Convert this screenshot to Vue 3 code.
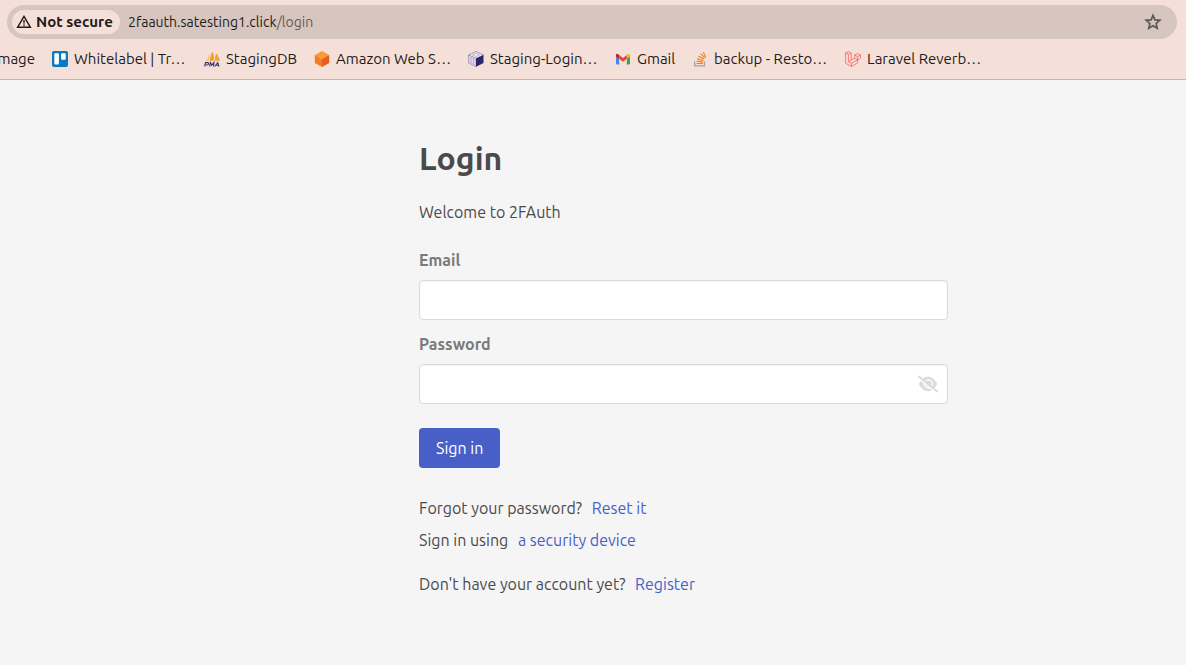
<script setup>
import { ref } from 'vue'

const email = ref('')
const password = ref('')
const revealed = ref(false)

const bookmarks = [
  { label: 'Whitelabel | Tr…', icon: 'board' },
  { label: 'StagingDB', icon: 'pma' },
  { label: 'Amazon Web S…', icon: 'cube' },
  { label: 'Staging-Login…', icon: 'box' },
  { label: 'Gmail', icon: 'mail' },
  { label: 'backup - Resto…', icon: 'stack' },
  { label: 'Laravel Reverb…', icon: 'laravel' },
]
</script>

<template>
  <div class="window">
    <header class="chrome">
      <div class="omnibox">
        <button class="security" type="button">
          <svg viewBox="0 0 16 16" width="16" height="16" aria-hidden="true">
            <path d="M8 2.4 14.4 13.3H1.6Z" fill="none" stroke="#1f1b1a" stroke-width="1.4" />
            <path d="M8 6v3.6M8 10.4v1.5" stroke="#1f1b1a" stroke-width="1.4" />
          </svg>
          <span>Not secure</span>
        </button>
        <a class="address" href="#"><span>2faauth.satesting1.click</span><span class="path">/login</span></a>
        <button class="star" type="button" aria-label="Bookmark this tab">
          <svg viewBox="0 0 18 18" width="18" height="18" aria-hidden="true">
            <path d="M9 2.4 10.9 6.9 15.8 7.3 12.1 10.5 13.2 15.3 9 12.8 4.8 15.3 5.9 10.5 2.2 7.3 7.1 6.9Z" fill="none" stroke="#5b5857" stroke-width="1.7" />
          </svg>
        </button>
      </div>
      <nav class="bookmarks" aria-label="Bookmarks">
        <a href="#" class="bookmark clipped">mage</a>
        <a v-for="b in bookmarks" :key="b.label" href="#" class="bookmark">
          <svg viewBox="0 0 16 16" width="16" height="16" aria-hidden="true">
            <g v-if="b.icon === 'board'">
              <rect width="16" height="16" rx="2" fill="#0b79bf" />
              <rect x="2.3" y="2.2" width="4.6" height="11.2" rx="1" fill="#fff" />
              <rect x="9.1" y="2.2" width="4.6" height="6.6" rx="1" fill="#fff" />
            </g>
            <g v-else-if="b.icon === 'pma'">
              <path d="M5.2 1.2C5 5 3.6 8.4 1 10.5L5.5 9.7Z" fill="#f9c27c" />
              <path d="M8.4.6C6.8 3.5 6 6.5 6 10l4-.5C10.2 6.5 9.6 3 8.4.6Z" fill="#f89c2c" />
              <path d="M12.3 2.5C11.2 5 10.8 7 10.9 9.8L15.8 10C15.4 7 14 4.5 12.3 2.5Z" fill="#f5a03c" />
              <path d="M.6 15.5 1.5 11.6H3.7Q5 11.7 4.6 12.9T2.8 14H1.1M5.5 15.5 6.5 11.6 7.7 14.2 10 11.6 9.4 15.5M10.7 15.5 13.7 11.6 15 15.5M12 14.3H14.7" fill="none" stroke="#34376c" stroke-width="1.1" />
            </g>
            <g v-else-if="b.icon === 'cube'">
              <path d="M8 0 15.2 4 8 8 .8 4Z" fill="#fb9a31" />
              <path d="M.8 4 8 8V16L.8 12Z" fill="#f57c22" />
              <path d="M15.2 4 8 8V16L15.2 12Z" fill="#e85c1c" />
            </g>
            <g v-else-if="b.icon === 'box'">
              <path d="M8 .5 15.5 4 8 7.5.5 4Z" fill="#f6edf1" stroke="#8583a5" stroke-width=".8" />
              <path d="M4.5 4 8 2.4 11.5 4 8 5.5Z" fill="none" stroke="#9a98b8" stroke-width=".6" />
              <path d="M.5 4 8 7.5V15.7L.5 12Z" fill="#f3e8f0" stroke="#8c86ad" stroke-width=".7" />
              <path d="M1 6.2 7.5 9.3M1 8.500 7.5 11.6M1 10.8 7.5 13.9" stroke="#d79bb8" stroke-width=".8" />
              <path d="M3 5.5V13M5.500 6.6V14" stroke="#9fb4d4" stroke-width=".8" />
              <path d="M15.5 4 8 7.5V15.7L15.5 12Z" fill="#29256f" />
            </g>
            <g v-else-if="b.icon === 'mail'">
              <path d="M1 3.5V12.5Q1 13.5 2 13.5H4.2V6.8Z" fill="#4285f4" />
              <path d="M11.8 6.8V13.5H14Q15 13.5 15 12.5V3.5Z" fill="#34a853" />
              <path d="M11.8 4V7.8L15 5.4V4Q14.6 2 12.8 3.2Z" fill="#fbbc04" />
              <path d="M1 4V5.4L4.2 7.8V4L3.2 3.2Q1.4 2 1 4Z" fill="#c5221f" />
              <path d="M4.2 4V7.8L8 10.7 11.8 7.8V4L8 6.9Z" fill="#ea4335" />
            </g>
            <g v-else-if="b.icon === 'stack'" fill="none">
              <path d="M2.7 10.5V14.8H12.4V10.5" stroke="#a4a09f" stroke-width="1.3" />
              <path d="M4.4 12.5H10.8M4.6 10.1 10.9 11.2M5.2 7.6 11.2 9.7M6.5 4.9 12 8.3M8.6 2.6 13 7.1M11.3 1.2 13.7 6" stroke="#f48024" stroke-width="1.2" />
            </g>
            <g v-else fill="none" stroke="#fb6e66" stroke-width=".9" stroke-linejoin="round">
              <path d="M.6 2 3.4.6 6.2 2V9.2L9.7 7.2V4L12.6 2.4 15.5 4V7.2L12.6 8.9V12L6.4 15.5.6 12.2Z" />
              <path d="M.6 2 3.4 3.5 6.2 2M3.4 3.5V10.7L6.2 9.2M3.4 10.7 6.4 12.3 12.6 8.9M6.4 12.3V15.5M9.7 4 12.6 5.6 15.5 4M12.6 5.6V8.9M9.7 7.2 12.6 8.9" />
            </g>
          </svg>
          <span>{{ b.label }}</span>
        </a>
      </nav>
    </header>

    <main class="page">
      <section class="login">
        <h1>Login</h1>
        <p class="welcome">Welcome to 2FAuth</p>
        <form @submit.prevent>
          <label for="email">Email</label>
          <input id="email" v-model="email" type="email" autocomplete="username" />
          <label for="password">Password</label>
          <div class="password">
            <input id="password" v-model="password" :type="revealed ? 'text' : 'password'" autocomplete="current-password" />
            <button class="reveal" type="button" aria-label="Show password" @click="revealed = !revealed">
              <svg viewBox="0 0 20 18" width="20" height="18" aria-hidden="true">
                <path d="M1 9C3 4.4 6.2 1.8 10 1.8S17 4.4 19 9C17 13.6 13.8 16.2 10 16.2S3 13.6 1 9Z" fill="#dbdbdb" />
                <circle cx="10.3" cy="9" r="4.1" fill="none" stroke="#fff" stroke-width="1.3" />
                <path d="M.6 3.4 17.2 17" stroke="#fff" stroke-width="1.3" />
                <path d="M.9 1.4 19.1 16.4" stroke="#dbdbdb" stroke-width="1.9" stroke-linecap="round" />
              </svg>
            </button>
          </div>
          <button class="submit" type="submit">Sign in</button>
        </form>
        <div class="links">
          <p>Forgot your password? <a href="#">Reset it</a></p>
          <p>Sign in using <a href="#">a security device</a></p>
          <p class="register">Don't have your account yet? <a href="#">Register</a></p>
        </div>
      </section>
    </main>
  </div>
</template>

<style>
html,
body {
  background: #f5f5f5;
}
</style>

<style scoped>
.window {
  min-height: 100vh;
  display: flex;
  flex-direction: column;
  overflow: hidden;
  font-family: Ubuntu, "Noto Sans", sans-serif;
  font-size: 16px;
  color: #4a4a4a;
}
.window * {
  box-sizing: border-box;
}
button,
input {
  font: inherit;
}
a {
  text-decoration: none;
}
.chrome {
  background: #f5e0d9;
  border-bottom: 1px solid #c9b5ae;
  color: #1f1b1a;
  padding-top: 5px;
}
.omnibox {
  display: flex;
  align-items: center;
  height: 34px;
  margin: 0 9px 0 7px;
  padding: 0 15px 0 5px;
  border-radius: 17px;
  background: #d7c6bf;
}
.security {
  display: flex;
  align-items: center;
  gap: 4px;
  width: 108px;
  height: 24px;
  padding: 0 4px;
  border: 0;
  border-radius: 12px;
  background: #f5e0d9;
  color: #1f1b1a;
  font-size: 15px;
  font-weight: 700;
  white-space: nowrap;
}
.security span,
.bookmark {
  line-height: 18px;
}
.address {
  flex: 1;
  margin-left: 8px;
  color: #1f1b1a;
  font-size: 14px;
}
.path {
  color: #655b58;
}
.star {
  display: flex;
  padding: 0;
  border: 0;
  background: none;
}
.bookmarks {
  display: grid;
  grid-template-columns: 52px 152px 110px 154px 147px 77px 153px auto;
  align-items: center;
  height: 40px;
}
.bookmark {
  display: flex;
  align-items: center;
  gap: 6px;
  color: #1f1b1a;
  font-size: 15px;
  white-space: nowrap;
}
.clipped {
  justify-content: flex-end;
  padding-right: 17px;
}
.bookmark svg {
  flex: none;
}
.page {
  flex: 1;
  display: grid;
  grid-template-columns: 419fr 529fr 238fr;
  padding: 60px 0;
}
.login {
  grid-column: 2;
}
h1 {
  margin: 0 0 24px;
  font-size: 32px;
  line-height: 36px;
  font-weight: 700;
}
.welcome {
  margin: 0 0 24px;
  line-height: 24px;
}
form {
  display: flex;
  flex-direction: column;
}
label {
  margin-bottom: 8px;
  line-height: 24px;
  font-weight: 700;
  color: #7a7a7a;
}
input {
  width: 100%;
  height: 40px;
  padding: 0 12px;
  border: 1px solid #dbdbdb;
  border-radius: 4px;
  background: #fff;
  box-shadow: inset 0 1px 2px rgba(10, 10, 10, 0.05);
  color: #363636;
}
#email {
  margin-bottom: 12px;
}
.password {
  position: relative;
}
.reveal {
  position: absolute;
  top: 0;
  right: 0;
  display: flex;
  align-items: center;
  justify-content: center;
  width: 40px;
  height: 40px;
  padding: 0;
  border: 0;
  background: none;
}
.submit {
  align-self: flex-start;
  height: 40px;
  margin-top: 24px;
  padding: 0 16px;
  border: 1px solid transparent;
  border-radius: 4px;
  background: #485fc7;
  color: #fff;
}
.links {
  margin-top: 28px;
}
.links p {
  margin: 0 0 8px;
  line-height: 24px;
}
.links a {
  margin-left: 6px;
  color: #485fc7;
}
.links .register {
  margin: 20px 0 0;
}
</style>
